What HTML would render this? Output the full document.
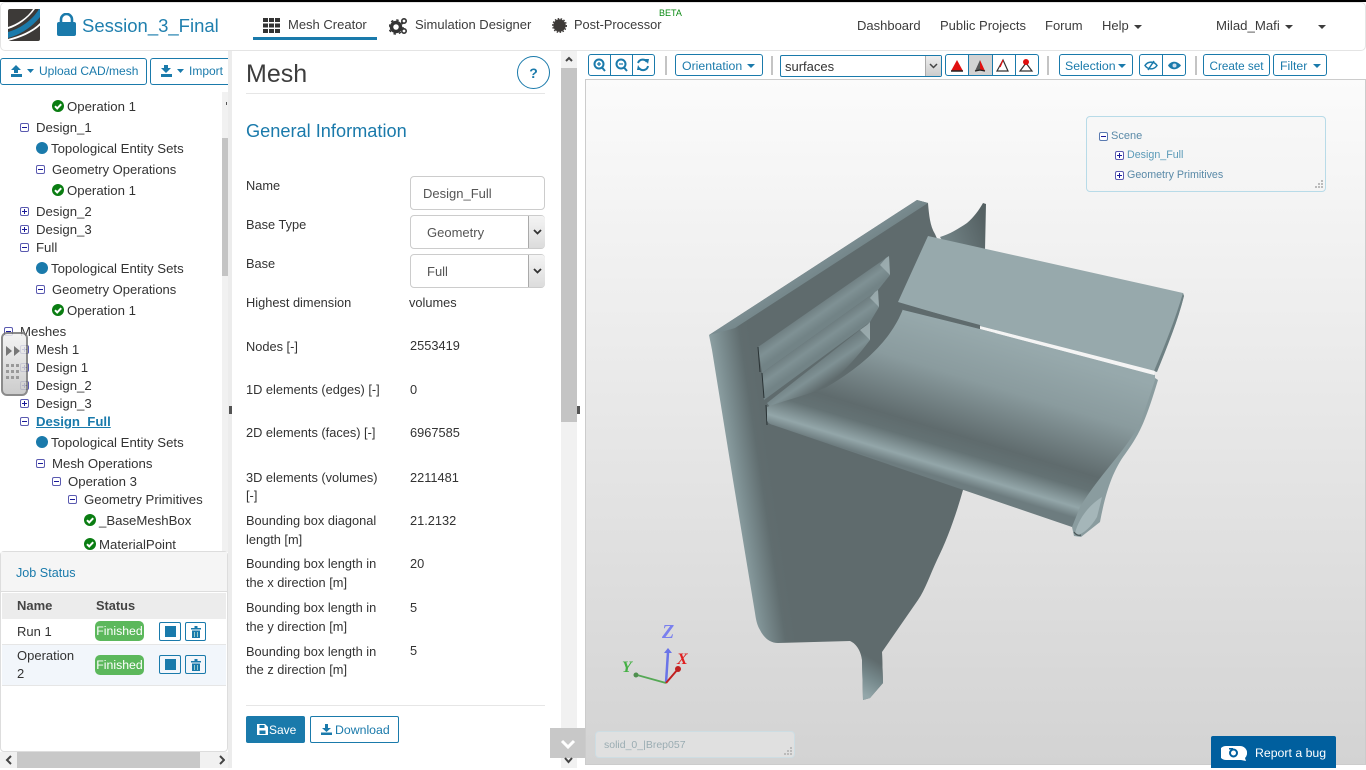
<!DOCTYPE html>
<html><head><meta charset="utf-8"><title>Mesh</title>
<style>
html,body{margin:0;padding:0;width:1366px;height:768px;overflow:hidden;background:#fff;font-family:"Liberation Sans",sans-serif;color:#333}
div,span,a{position:absolute;box-sizing:border-box}
.t{white-space:nowrap;font-size:13.2px;line-height:18px;color:#333;margin-top:1px}
.f{white-space:nowrap;font-size:12.8px;line-height:18px;color:#333;margin-top:1px}
.n{white-space:nowrap;font-size:13px;line-height:20px;color:#3c3c3c;margin-top:1px}
.bt{border:1px solid #1a7aab;border-radius:3px;background:#fff;color:#1a7aab;font-size:12.300px;line-height:23px;height:22px;top:54px;white-space:nowrap;text-align:center}
.c{position:absolute;width:12px;height:12px}
.p,.m{width:9px;height:9px;border:1px solid #5a5ab0;border-radius:2px;background:linear-gradient(#1a1a9a,#1a1a9a) center/5px 1px no-repeat #fff}
.p{background:linear-gradient(#1a1a9a,#1a1a9a) center/5px 1px no-repeat,linear-gradient(#1a1a9a,#1a1a9a) center/1px 5px no-repeat,#fff}
.dot{width:12px;height:12px;border-radius:50%;background:#1a7aab}
.sel{border:1px solid #ccc;border-radius:4px;background:#fff;left:410px;width:135px;height:34px}
.arr{left:117px;top:0;width:17px;height:32px;background:linear-gradient(#f4f4f4,#dcdcdc);border-left:1px solid #aaa;border-radius:0 3px 3px 0}
.car{width:0;height:0;border-left:4px solid transparent;border-right:4px solid transparent;border-top:4px solid #3c3c3c}
.sep{top:56px;width:2px;height:19px;background:#c4c4c4}
</style></head><body>
<svg width="0" height="0" style="position:absolute"><defs>
<symbol id="chk" viewBox="0 0 12 12"><circle cx="6" cy="6" r="6" fill="#0a7d12"/><path d="M3 6.200L5.200 8.400 9.200 4.200" stroke="#fff" stroke-width="2" fill="none"/></symbol>
</defs></svg>

<!-- top bar -->
<div style="left:0;top:0;width:1366px;height:2px;background:#000"></div>
<div style="left:0;top:2px;width:1366px;height:49px;background:#fff;border:1px solid #e4e4e4;border-radius:5px"></div>
<svg style="position:absolute;left:8px;top:9px" width="32" height="32" viewBox="0 0 32 32"><rect width="32" height="32" rx="2" fill="#3d3a38"/><path d="M0 23C11 20 24 12 31 0H32V8C24 18 12 26 0 29Z" fill="#1a7aab"/><path d="M0 18C9 15 19 9 25 0H27C20 10 10 17 0 20Z" fill="#fff"/><path d="M0 30C12 27 24 22 32 14V16.500C24 24 12 29 0 32Z" fill="#fff"/></svg>
<svg style="position:absolute;left:57px;top:13px" width="19" height="23" viewBox="0 0 19 23"><path d="M4 10V6.500a5.500 5.500 0 0 1 11 0V10" fill="none" stroke="#1a7aab" stroke-width="2.600"/><rect x="0" y="9" width="19" height="14" rx="2" fill="#1a7aab"/></svg>
<span style="left:82px;top:13px;font-size:18.500px;line-height:26px;color:#1f7fae;white-space:nowrap">Session_3_Final</span>
<svg style="position:absolute;left:263px;top:18px" width="17" height="15"><g fill="#333"><rect x="0" y="0" width="5" height="4"/><rect x="6" y="0" width="5" height="4"/><rect x="12" y="0" width="5" height="4"/><rect x="0" y="5.500" width="5" height="4"/><rect x="6" y="5.500" width="5" height="4"/><rect x="12" y="5.500" width="5" height="4"/><rect x="0" y="11" width="5" height="4"/><rect x="6" y="11" width="5" height="4"/><rect x="12" y="11" width="5" height="4"/></g></svg>
<span class="n" style="left:288px;top:14px">Mesh Creator</span>
<div style="left:253px;top:37px;width:124px;height:3px;background:#1a7aab"></div>
<svg style="position:absolute;left:389px;top:17px" width="19" height="18" viewBox="0 0 19 18"><circle cx="7" cy="10" r="4.500" fill="none" stroke="#333" stroke-width="3.500"/><circle cx="7" cy="10" r="7" fill="none" stroke="#333" stroke-width="1.500" stroke-dasharray="2.500 3"/><circle cx="15" cy="4" r="2.200" fill="none" stroke="#333" stroke-width="1.600"/><circle cx="15" cy="14" r="2.200" fill="none" stroke="#333" stroke-width="1.600"/></svg>
<span class="n" style="left:415px;top:14px">Simulation Designer</span>
<svg style="position:absolute;left:552px;top:18px" width="15" height="15" viewBox="0 0 15 15"><circle cx="7.500" cy="7.500" r="6.200" fill="#3d3a38"/><circle cx="7.500" cy="7.500" r="6.800" fill="none" stroke="#3d3a38" stroke-width="1.400" stroke-dasharray="1.500 1.500"/></svg>
<span class="n" style="left:574px;top:14px;font-size:12.800px">Post-Processor</span>
<span style="left:659px;top:7px;font-size:9px;line-height:12px;color:#0a8a12">BETA</span>
<span class="n" style="left:857px;top:15px">Dashboard</span>
<span class="n" style="left:940px;top:15px">Public Projects</span>
<span class="n" style="left:1045px;top:15px">Forum</span>
<span class="n" style="left:1102px;top:15px">Help</span><div class="car" style="left:1134px;top:25px"></div>
<span class="n" style="left:1216px;top:15px;font-size:13.200px">Milad_Mafi</span><div class="car" style="left:1285px;top:25px"></div>
<div class="car" style="left:1318px;top:25px"></div>

<!-- left tree -->
<div style="left:0;top:58px;width:147px;height:27px;border:1px solid #1a7aab;border-radius:3px;color:#1a7aab;font-size:12px;line-height:25px;padding-left:38px;white-space:nowrap">Upload CAD/mesh</div>
<svg style="position:absolute;left:11px;top:65px" width="23" height="12"><path d="M5 0L10 5H7V8H3V5H0ZM0 9H11V12H0Z" fill="#1a7aab"/><path d="M16 4H23L19.500 8Z" fill="#1a7aab"/></svg>
<div style="left:150px;top:58px;width:80px;height:27px;border:1px solid #1a7aab;border-right:none;border-radius:3px 0 0 3px;color:#1a7aab;font-size:12px;line-height:25px;padding-left:38px;white-space:nowrap">Import</div>
<svg style="position:absolute;left:161px;top:65px" width="23" height="12"><path d="M3 0H7V3H10L5 8 0 3H3ZM0 9H11V12H0Z" fill="#1a7aab"/><path d="M16 4H23L19.500 8Z" fill="#1a7aab"/></svg>

<svg class="c" style="left:52px;top:100px"><use href="#chk"/></svg><span class="t" style="left:67px;top:97px">Operation 1</span>
<div class="m" style="left:20px;top:123px"></div><span class="t" style="left:36px;top:118px">Design_1</span>
<div class="dot" style="left:36px;top:142px"></div><span class="t" style="left:51px;top:139px">Topological Entity Sets</span>
<div class="m" style="left:36px;top:165px"></div><span class="t" style="left:52px;top:160px;font-size:13px">Geometry Operations</span>
<svg class="c" style="left:52px;top:184px"><use href="#chk"/></svg><span class="t" style="left:67px;top:181px">Operation 1</span>
<div class="p" style="left:20px;top:207px"></div><span class="t" style="left:36px;top:202px">Design_2</span>
<div class="p" style="left:20px;top:225px"></div><span class="t" style="left:36px;top:220px">Design_3</span>
<div class="m" style="left:20px;top:243px"></div><span class="t" style="left:36px;top:238px">Full</span>
<div class="dot" style="left:36px;top:262px"></div><span class="t" style="left:51px;top:259px">Topological Entity Sets</span>
<div class="m" style="left:36px;top:285px"></div><span class="t" style="left:52px;top:280px;font-size:13px">Geometry Operations</span>
<svg class="c" style="left:52px;top:304px"><use href="#chk"/></svg><span class="t" style="left:67px;top:301px">Operation 1</span>
<div class="m" style="left:4px;top:327px"></div><span class="t" style="left:20px;top:322px">Meshes</span>
<div class="p" style="left:20px;top:345px"></div><span class="t" style="left:36px;top:340px">Mesh 1</span>
<div class="p" style="left:20px;top:363px"></div><span class="t" style="left:36px;top:358px">Design 1</span>
<div class="p" style="left:20px;top:381px"></div><span class="t" style="left:36px;top:376px">Design_2</span>
<div class="p" style="left:20px;top:399px"></div><span class="t" style="left:36px;top:394px">Design_3</span>
<div class="m" style="left:20px;top:417px"></div><span class="t" style="left:36px;top:412px;color:#1a7aab;font-weight:bold;text-decoration:underline">Design_Full</span>
<div class="dot" style="left:36px;top:436px"></div><span class="t" style="left:51px;top:433px">Topological Entity Sets</span>
<div class="m" style="left:36px;top:459px"></div><span class="t" style="left:52px;top:454px">Mesh Operations</span>
<div class="m" style="left:52px;top:477px"></div><span class="t" style="left:68px;top:472px">Operation 3</span>
<div class="m" style="left:68px;top:495px"></div><span class="t" style="left:84px;top:490px">Geometry Primitives</span>
<svg class="c" style="left:84px;top:514px"><use href="#chk"/></svg><span class="t" style="left:99px;top:511px">_BaseMeshBox</span>
<svg class="c" style="left:84px;top:538px"><use href="#chk"/></svg><span class="t" style="left:99px;top:535px">MaterialPoint</span>

<!-- tree scrollbar -->
<div style="left:222px;top:92px;width:6px;height:460px;background:#f1f1f1"></div>
<div style="left:222px;top:138px;width:6px;height:138px;background:#c4c4c4"></div>
<div style="left:226px;top:102px;width:1px;height:3px;background:#555"></div>
<div style="left:228px;top:51px;width:4px;height:717px;background:#ececec"></div>
<div style="left:229px;top:406px;width:3px;height:8px;background:#555"></div>

<!-- collapsed handle -->
<div style="left:1px;top:332px;width:27px;height:64px;border:2px solid #777;border-radius:6px;background:linear-gradient(#f2f2f2,#c4c4c4);opacity:.85"></div>
<svg style="position:absolute;left:6px;top:345px" width="16" height="40"><path d="M0 1L6 6 0 11ZM8 1L14 6 8 11Z" fill="#777"/><g fill="#999"><rect x="0" y="19" width="3" height="3"/><rect x="5" y="19" width="3" height="3"/><rect x="10" y="19" width="3" height="3"/><rect x="0" y="25" width="3" height="3"/><rect x="5" y="25" width="3" height="3"/><rect x="10" y="25" width="3" height="3"/><rect x="0" y="31" width="3" height="3"/><rect x="5" y="31" width="3" height="3"/><rect x="10" y="31" width="3" height="3"/></g></svg>

<!-- job status -->
<div style="left:0;top:551px;width:228px;height:201px;background:#fff;border:1px solid #ddd;border-radius:4px"></div>
<div style="left:1px;top:552px;width:226px;height:40px;background:#f5f5f5;border-bottom:1px solid #ddd"></div>
<span style="left:16px;top:564px;font-size:12.600px;line-height:18px;color:#1a7aab;white-space:nowrap">Job Status</span>
<div style="left:2px;top:593px;width:224px;height:26px;background:#ececec"></div>
<span class="t" style="left:17px;top:596px;font-weight:bold;color:#444;font-size:13px">Name</span>
<span class="t" style="left:96px;top:596px;font-weight:bold;color:#444;font-size:12.800px">Status</span>
<span class="t" style="left:17px;top:622px;font-size:13px">Run 1</span>
<div style="left:2px;top:644px;width:224px;height:42px;background:#f2f6fb;border-top:1px solid #e6e6e6;border-bottom:1px solid #e6e6e6"></div>
<span class="t" style="left:17px;top:646px;font-size:13px">Operation</span><span class="t" style="left:17px;top:664px;font-size:13px">2</span>
<div style="left:95px;top:621px;width:49px;height:20px;background:#5cb85c;border-radius:5px;color:#fff;font-size:12.300px;line-height:20px;text-align:center">Finished</div>
<div style="left:95px;top:655px;width:49px;height:20px;background:#5cb85c;border-radius:5px;color:#fff;font-size:12.300px;line-height:20px;text-align:center">Finished</div>
<div style="left:159px;top:622px;width:22px;height:19px;border:1px solid #1a7aab;border-radius:2px"><div style="left:5px;top:3px;width:11px;height:11px;background:#1a7aab"></div></div>
<div style="left:185px;top:622px;width:21px;height:19px;border:1px solid #1a7aab;border-radius:2px"><svg style="position:absolute;left:5px;top:3px" width="10" height="12"><path d="M0 2H10V3.500H0ZM3.500 0H6.500V2H3.500ZM1 4.500H9V12H1Z" fill="#1a7aab"/><path d="M3.500 6V11M6.500 6V11" stroke="#9cc" stroke-width="1"/></svg></div>
<div style="left:159px;top:655px;width:22px;height:19px;border:1px solid #1a7aab;border-radius:2px"><div style="left:5px;top:3px;width:11px;height:11px;background:#1a7aab"></div></div>
<div style="left:185px;top:655px;width:21px;height:19px;border:1px solid #1a7aab;border-radius:2px"><svg style="position:absolute;left:5px;top:3px" width="10" height="12"><path d="M0 2H10V3.500H0ZM3.500 0H6.500V2H3.500ZM1 4.500H9V12H1Z" fill="#1a7aab"/><path d="M3.500 6V11M6.500 6V11" stroke="#9cc" stroke-width="1"/></svg></div>
<div style="left:0;top:752px;width:228px;height:16px;background:#f1f1f1"></div>
<div style="left:17px;top:752px;width:183px;height:16px;background:#c8c8c8"></div>
<svg style="position:absolute;left:5px;top:755px" width="220" height="10"><path d="M6 1L2 5 6 9M215 1L219 5 215 9" stroke="#444" stroke-width="2" fill="none"/></svg>

<!-- middle panel -->
<span style="left:246px;top:58px;font-size:25px;line-height:32px;color:#3d3d3d">Mesh</span>
<div style="left:246px;top:93px;width:299px;height:1px;background:#e6e6e6"></div>
<div style="left:517px;top:56px;width:33px;height:33px;border:1px solid #1a7aab;border-radius:50%;text-align:center;color:#1a7aab;font-size:14px;line-height:32px;font-weight:bold">?</div>
<span style="left:246px;top:120px;font-size:18.200px;line-height:22px;color:#1a7aab;white-space:nowrap">General Information</span>
<span class="f" style="left:246px;top:176px">Name</span>
<div style="left:410px;top:176px;width:135px;height:34px;border:1px solid #ccc;border-radius:4px"></div>
<span class="t" style="left:423px;top:184px;color:#555;font-size:13px">Design_Full</span>
<span class="f" style="left:246px;top:215px">Base Type</span>
<div class="sel" style="top:215px"><div class="arr"><svg style="position:absolute;left:4px;top:13px" width="9" height="6"><path d="M1 1L4.500 4.500 8 1" stroke="#333" stroke-width="1.800" fill="none"/></svg></div></div>
<span class="t" style="left:427px;top:223px;color:#555;font-size:13px">Geometry</span>
<span class="f" style="left:246px;top:254px">Base</span>
<div class="sel" style="top:254px"><div class="arr"><svg style="position:absolute;left:4px;top:13px" width="9" height="6"><path d="M1 1L4.500 4.500 8 1" stroke="#333" stroke-width="1.800" fill="none"/></svg></div></div>
<span class="t" style="left:427px;top:262px;color:#555;font-size:13px">Full</span>
<span class="f" style="left:246px;top:293px">Highest dimension</span><span class="f" style="left:409px;top:293px">volumes</span>
<span class="f" style="left:246px;top:337px">Nodes [-]</span><span class="f" style="left:410px;top:336px">2553419</span>
<span class="f" style="left:246px;top:380px">1D elements (edges) [-]</span><span class="f" style="left:410px;top:380px">0</span>
<span class="f" style="left:246px;top:423px">2D elements (faces) [-]</span><span class="f" style="left:410px;top:423px">6967585</span>
<span class="f" style="left:246px;top:468px">3D elements (volumes)</span><span class="f" style="left:246px;top:486px">[-]</span><span class="f" style="left:410px;top:468px">2211481</span>
<span class="f" style="left:246px;top:511px">Bounding box diagonal</span><span class="f" style="left:246px;top:530px">length [m]</span><span class="f" style="left:410px;top:511px">21.2132</span>
<span class="f" style="left:246px;top:554px">Bounding box length in</span><span class="f" style="left:246px;top:573px">the x direction [m]</span><span class="f" style="left:410px;top:554px">20</span>
<span class="f" style="left:246px;top:598px">Bounding box length in</span><span class="f" style="left:246px;top:617px">the y direction [m]</span><span class="f" style="left:410px;top:598px">5</span>
<span class="f" style="left:246px;top:642px">Bounding box length in</span><span class="f" style="left:246px;top:660px">the z direction [m]</span><span class="f" style="left:410px;top:641px">5</span>
<div style="left:246px;top:705px;width:299px;height:1px;background:#e6e6e6"></div>
<div style="left:246px;top:716px;width:59px;height:27px;background:#1a7aab;border-radius:2px;color:#fff;font-size:12px;line-height:29px;padding-left:23px">Save</div>
<svg style="position:absolute;left:257px;top:724px" width="11" height="11"><path d="M0 0H8L11 3V11H0Z" fill="#fff"/><rect x="2.500" y="1" width="5" height="3" fill="#1a7aab"/><rect x="2.500" y="6.500" width="6" height="3.500" fill="#1a7aab"/></svg>
<div style="left:310px;top:716px;width:89px;height:27px;border:1px solid #1a7aab;border-radius:2px;color:#1a7aab;font-size:12.300px;line-height:27px;padding-left:24px">Download</div>
<svg style="position:absolute;left:321px;top:724px" width="11" height="11"><path d="M4 0H7V4H10L5.500 8 1 4H4ZM0 8.500H11V11H0Z" fill="#1a7aab"/></svg>

<!-- middle scrollbar -->
<div style="left:561px;top:51px;width:16px;height:717px;background:#f1f1f1"></div>
<div style="left:561px;top:68px;width:16px;height:354px;background:#c4c4c4"></div>
<svg style="position:absolute;left:565px;top:56px" width="8" height="6"><path d="M1 5L4 2 7 5" stroke="#444" stroke-width="2" fill="none"/></svg>
<div style="left:577px;top:51px;width:8px;height:717px;background:#fff"></div>
<div style="left:577px;top:406px;width:3px;height:8px;background:#555"></div>

<!-- toolbar -->
<div class="bt" style="left:588px;width:67px"></div>
<div style="left:610px;top:55px;width:1px;height:20px;background:#1a7aab"></div><div style="left:632px;top:55px;width:1px;height:20px;background:#1a7aab"></div>
<svg style="position:absolute;left:592px;top:58px" width="60" height="14"><g fill="none" stroke="#1a7aab" stroke-width="2"><circle cx="7" cy="6" r="4.500"/><path d="M10 9.500L13 13"/><circle cx="29" cy="6" r="4.500"/><path d="M32 9.500L35 13"/><path d="M46 5A5 5 0 0 1 55 4M56 8A5 5 0 0 1 47 10"/></g><path d="M5 6H9M7 4V8M27 6H31" stroke="#1a7aab" stroke-width="1.300"/><path d="M53 1L57 1 56 6ZM49 12L45 12 46 7Z" fill="#1a7aab"/></svg>
<div class="sep" style="left:665px"></div>
<div class="bt" style="left:675px;width:88px;text-align:left;padding-left:6px">Orientation</div><div class="car" style="left:747px;top:64px;border-top-color:#1a7aab"></div>
<div class="sep" style="left:771px"></div>
<div style="left:780px;top:55px;width:162px;height:22px;border:1px solid #1a7aab;border-radius:2px;font-size:13px;line-height:21px;padding-left:4px;color:#333">surfaces</div>
<div style="left:925px;top:56px;width:16px;height:20px;background:linear-gradient(#eee,#ccc);border-left:1px solid #aaa"><svg style="position:absolute;left:3px;top:7px" width="9" height="6"><path d="M1 1L4.500 4.500 8 1" stroke="#444" stroke-width="1.500" fill="none"/></svg></div>
<div class="bt" style="left:945px;width:94px"></div>
<div style="left:968px;top:55px;width:24px;height:20px;background:#d2d2d2"></div>
<div style="left:968px;top:55px;width:1px;height:20px;background:#1a7aab"></div><div style="left:992px;top:55px;width:1px;height:20px;background:#1a7aab"></div><div style="left:1015px;top:55px;width:1px;height:20px;background:#1a7aab"></div>
<svg style="position:absolute;left:945px;top:55px" width="94" height="20"><path d="M12 5L6 16 18 16Z" fill="#e01010"/><path d="M6 16H18" stroke="#222" stroke-width="1.500"/><path d="M35 5L30 16 35 15Z" fill="#555"/><path d="M35 5L40 16 35 15Z" fill="#e01010"/><path d="M30 16L35 15 40 16" stroke="#222" stroke-width="1.200" fill="none"/><path d="M58 5L52 16 63 16Z" fill="#fff" stroke="#333" stroke-width="1.200"/><path d="M58 5L55 12" stroke="#e01010" stroke-width="1.300"/><path d="M81 8L75 16 87 16Z" fill="#fff" stroke="#333" stroke-width="1.200"/><circle cx="81" cy="7" r="3" fill="#e01010"/></svg>
<div class="sep" style="left:1047px"></div>
<div class="bt" style="left:1059px;width:74px;text-align:left;padding-left:5px">Selection</div><div class="car" style="left:1118px;top:64px;border-top-color:#1a7aab"></div>
<div class="bt" style="left:1139px;width:47px"></div><div style="left:1162px;top:55px;width:1px;height:20px;background:#1a7aab"></div>
<svg style="position:absolute;left:1144px;top:60px" width="38" height="11"><path d="M1 5.500C4 1 10 1 13 5.500 10 10 4 10 1 5.500Z" fill="none" stroke="#1a7aab" stroke-width="1.500"/><path d="M4 10L10 1" stroke="#1a7aab" stroke-width="1.500"/><path d="M24 5.500C27 .5 33 .5 37 5.500 33 10.500 27 10.500 24 5.500Z" fill="#1a7aab"/><circle cx="30.500" cy="5.500" r="2" fill="#cde"/></svg>
<div class="sep" style="left:1195px"></div>
<div class="bt" style="left:1203px;width:67px;font-size:11.700px">Create set</div>
<div class="bt" style="left:1273px;width:54px;text-align:left;padding-left:6px">Filter</div><div class="car" style="left:1313px;top:64px;border-top-color:#1a7aab"></div>

<!-- viewport -->
<div style="left:585px;top:79px;width:781px;height:686px;border:1px solid #ccc;background:linear-gradient(#fbfbfb,#d3d3d3)"></div>

<svg style="position:absolute;left:585px;top:80px" width="781" height="685" viewBox="585 80 781 685">
<defs>
<linearGradient id="wing" gradientUnits="userSpaceOnUse" x1="950" y1="323" x2="906.500" y2="467"><stop offset="0" stop-color="#97a9ac"/><stop offset=".32" stop-color="#8a9b9e"/><stop offset=".7" stop-color="#5f6b6d"/><stop offset=".8" stop-color="#647274"/><stop offset=".93" stop-color="#93a6a9"/><stop offset="1" stop-color="#6d7c7f"/></linearGradient>
<linearGradient id="plate" gradientUnits="userSpaceOnUse" x1="805" y1="255" x2="825" y2="285"><stop offset="0" stop-color="#82959a"/><stop offset="1" stop-color="#6e7f82"/></linearGradient>
<linearGradient id="body" gradientUnits="userSpaceOnUse" x1="719" y1="400" x2="759" y2="394"><stop offset="0" stop-color="#8c9fa2"/><stop offset=".25" stop-color="#7c8e91"/><stop offset=".75" stop-color="#606d6f"/><stop offset="1" stop-color="#5f6b6d"/></linearGradient>
<linearGradient id="fin" gradientUnits="userSpaceOnUse" x1="945" y1="240" x2="986" y2="225"><stop offset="0" stop-color="#728386"/><stop offset="1" stop-color="#556163"/></linearGradient>
<linearGradient id="stem" gradientUnits="userSpaceOnUse" x1="860" y1="692" x2="878" y2="662"><stop offset="0" stop-color="#93a6a9"/><stop offset=".5" stop-color="#76898c"/><stop offset="1" stop-color="#5f6b6d"/></linearGradient>
<linearGradient id="s1" gradientUnits="userSpaceOnUse" x1="820" y1="300" x2="832" y2="317"><stop offset="0" stop-color="#6a797c"/><stop offset=".55" stop-color="#7f9194"/><stop offset="1" stop-color="#728386"/></linearGradient>
<linearGradient id="s2" gradientUnits="userSpaceOnUse" x1="818" y1="330" x2="830" y2="347"><stop offset="0" stop-color="#6a797c"/><stop offset=".55" stop-color="#7f9194"/><stop offset="1" stop-color="#728386"/></linearGradient>
<linearGradient id="s3" gradientUnits="userSpaceOnUse" x1="815" y1="360" x2="830" y2="382"><stop offset="0" stop-color="#6a797c"/><stop offset=".5" stop-color="#7f9194"/><stop offset="1" stop-color="#5f6b6d"/></linearGradient>
</defs>
<!-- back fin -->
<path d="M940 237C950 234 958 229 967 223C974 217 979 210 983 203L986 204L985 250L945 245Z" fill="url(#fin)"/>
<!-- main body -->
<path d="M709 335L917 200L928 203C929 215 930 226 935 234L960 290L1000 300L975 480L963 490C956 515 947 540 937 560C930 575 925 590 918 600L882 652L883 683L870 698L863 700L862 660C861 652 857 644 850 641L778 643C770 643 764 638 760 630C757 625 756 620 755 613L733 480L712 350Z" fill="url(#body)"/>
<path d="M858 646C861 650 862 655 862 660L863 700L870 698L883 683L882 652L875 648Z" fill="url(#stem)"/>
<!-- plate top face -->
<path d="M709 335L917 200L928 203L735 328C725 331 716 333 709 335Z" fill="url(#plate)"/>
<!-- slots -->
<path d="M758 347L889 256L890 275L878 290L762 373Z" fill="url(#s1)"/>
<path d="M762 373L878 290L879 307L870 322L764 400Z" fill="url(#s2)"/>
<path d="M767 403L870 322L870 340C855 360 838 378 820 390L770 407Z" fill="url(#s3)"/>
<path d="M758 347L760 372M762 373L764 398M766 405L767 425" stroke="#2a3335" stroke-width="1" fill="none"/>
<path d="M886 258L889 256L890 275L880 265ZM875 292L878 290L879 307L870 298ZM867 325L870 322L870 340L860 330Z" fill="#a5b5b8" opacity=".75"/>
<!-- end loop, rim behind wing -->
<path d="M1155 378L1158 380C1152 400 1146 418 1140 430C1134 442 1128 450 1123 457C1113 472 1106 490 1100 522L1081 537L1074 536L1072 527L1040 480L1100 420Z" fill="#8a9c9f"/>
<path d="M1075 533C1079 518 1089 505 1102 497L1097 517C1091 527 1084 533 1078 535Z" fill="#a5b6b9"/>
<path d="M1074 532C1076 535 1078 536 1081 535" stroke="#4a5658" stroke-width="1.200" fill="none"/>
<!-- wing -->
<path d="M903 309L980 329L1155 375L1155 380C1150 395 1145 410 1140 423C1133 436 1125 447 1117 457C1105 472 1090 490 1080 507L1072 527L773 425C769 424 767 422 767 420L767 407C780 402 800 397 825 388C870 362 893 335 903 309Z" fill="url(#wing)"/>
<!-- upper flap -->
<path d="M928 236L1183 293L1184 296C1178 320 1168 345 1155 372L980 326L898 302Z" fill="#97a9ac"/>
<path d="M1183 293L1184 296C1178 320 1168 345 1157 372L1154 371C1165 345 1175 320 1183 293Z" fill="#6e8083"/>
<path d="M898 303L980 325V329L903 310Z" fill="#5f6b6d"/>
<path d="M980 326L1155 371L1154 375L980 329Z" fill="#f4f4f4"/>
<!-- triad -->
<path d="M666 683L668 652" stroke="#6a74e8" stroke-width="2.500"/><path d="M664 653L668 648 672 653Z" fill="#6a74e8"/>
<path d="M666 683L637 675" stroke="#55a855" stroke-width="1.800"/><circle cx="636" cy="675" r="2.500" fill="#4f8f4f"/>
<path d="M666 683L678 669" stroke="#c02020" stroke-width="2"/><circle cx="678" cy="669" r="3" fill="#c02020"/>
<text x="662" y="638" font-family="Liberation Serif" font-size="20" font-weight="bold" font-style="italic" fill="#7a80ee">Z</text>
<text x="677" y="664" font-family="Liberation Serif" font-size="16" font-weight="bold" font-style="italic" fill="#e02020">X</text>
<text x="622" y="672" font-family="Liberation Serif" font-size="16" font-weight="bold" font-style="italic" fill="#44b044">Y</text>
</svg>

<!-- scene box -->
<div style="left:1086px;top:116px;width:240px;height:76px;border:1px solid #b8dbe8;border-radius:4px;background:rgba(245,245,245,.4)"></div>
<div class="m" style="left:1099px;top:132px;border-color:#5a7ab0"></div><span style="left:1111px;top:128px;font-size:11px;line-height:16px;color:#5a8aa8">Scene</span>
<div class="p" style="left:1115px;top:151px;border-color:#5a5ab0"></div><span style="left:1127px;top:147px;font-size:10.700px;line-height:16px;color:#5a9ab8;white-space:nowrap">Design_Full</span>
<div class="p" style="left:1115px;top:171px;border-color:#5a5ab0"></div><span style="left:1127px;top:167px;font-size:10.700px;line-height:16px;color:#5a8aa8;white-space:nowrap">Geometry Primitives</span>
<svg style="position:absolute;left:1314px;top:180px" width="10" height="10" fill="#bbb"><rect x="7" y="0" width="2" height="2"/><rect x="4" y="3" width="2" height="2"/><rect x="7" y="3" width="2" height="2"/><rect x="1" y="6" width="2" height="2"/><rect x="4" y="6" width="2" height="2"/><rect x="7" y="6" width="2" height="2"/></svg>

<!-- bottom overlays -->
<div style="left:550px;top:728px;width:35px;height:30px;background:#c8c8c8"></div>
<svg style="position:absolute;left:560px;top:738px" width="16" height="12"><path d="M2 3L8 9 14 3" stroke="#fff" stroke-width="3" fill="none"/></svg>
<svg style="position:absolute;left:564px;top:757px" width="10" height="8"><path d="M1 1L4.500 5 8 1" stroke="#444" stroke-width="2" fill="none"/></svg>
<div style="left:595px;top:731px;width:200px;height:27px;background:#e0e0e0;border:1px solid #cddde3;border-radius:4px;font-size:10.500px;line-height:26px;padding-left:8px;color:#9aacb2">solid_0_|Brep057</div>
<svg style="position:absolute;left:783px;top:747px" width="10" height="10" fill="#bbb"><rect x="7" y="0" width="2" height="2"/><rect x="4" y="3" width="2" height="2"/><rect x="7" y="3" width="2" height="2"/><rect x="1" y="6" width="2" height="2"/><rect x="4" y="6" width="2" height="2"/><rect x="7" y="6" width="2" height="2"/></svg>
<div style="left:1211px;top:736px;width:125px;height:32px;background:#005f9e;border-radius:2px 2px 0 0;color:#fff;font-size:12.300px;line-height:34px;padding-left:44px;white-space:nowrap">Report a bug</div>
<svg style="position:absolute;left:1221px;top:745px" width="26" height="17"><path d="M5 1H19A7 7 0 0 1 24 13L25 16 20 15H5A7 7 0 0 1 5 1Z" fill="#fff"/><circle cx="12.500" cy="8" r="3.500" fill="none" stroke="#005f9e" stroke-width="2"/><rect x="8" y="3" width="4" height="1.500" fill="#005f9e"/></svg>
</body></html>
